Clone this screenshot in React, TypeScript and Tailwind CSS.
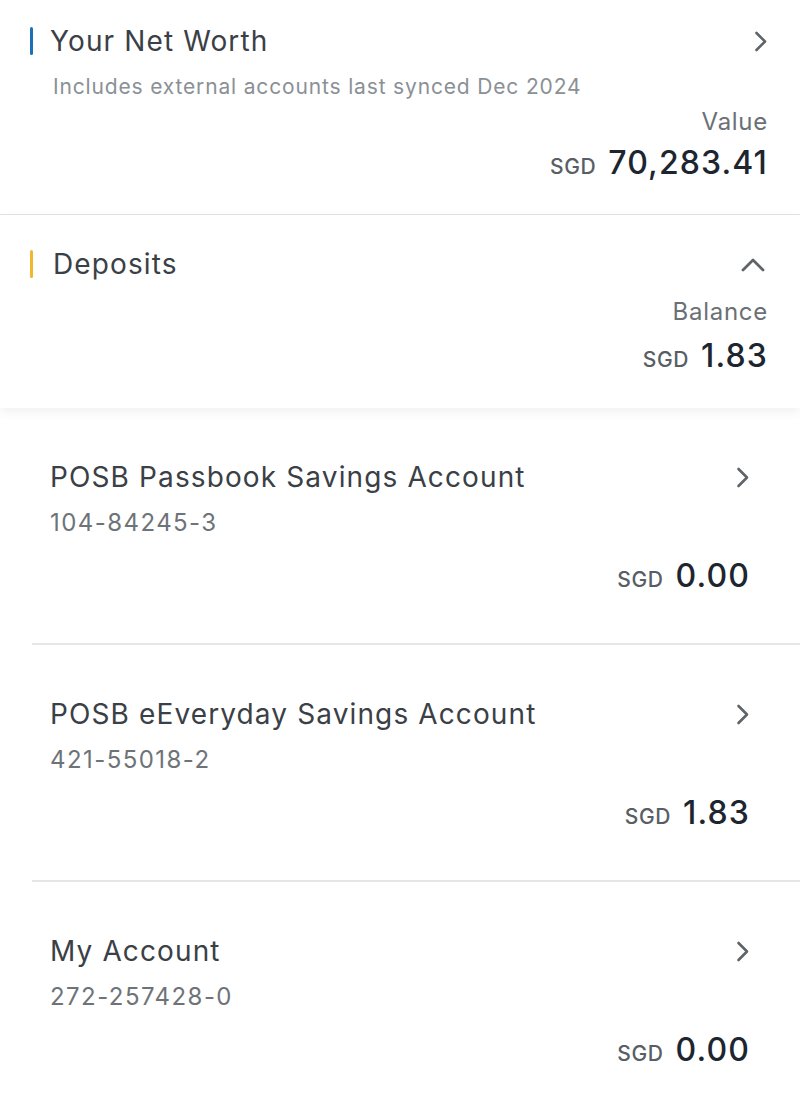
import React from "react";

const ChevronRight = () => (
  <svg width="14" height="21" viewBox="0 0 14 21" fill="none" className="shrink-0">
    <path d="M2.5 2 L11 10.5 L2.5 19" stroke="#5f6469" strokeWidth="2.6" strokeLinecap="round" strokeLinejoin="round" />
  </svg>
);

const ChevronUp = () => (
  <svg width="24" height="15" viewBox="0 0 24 15" fill="none" className="shrink-0">
    <path d="M2 13 L12 3 L22 13" stroke="#5f6469" strokeWidth="2.8" strokeLinecap="round" strokeLinejoin="round" />
  </svg>
);

const Amount = ({ value }: { value: string }) => (
  <div className="flex h-[40px] items-baseline justify-end gap-[12px] leading-[40px]">
    <span className="text-[21px] font-medium tracking-[0.03em] text-[#585e64]">SGD</span>
    <span className="text-[32px] font-medium tracking-[0.035em] text-[#1d2630]">{value}</span>
  </div>
);

const accounts = [
  { name: "POSB Passbook Savings Account", number: "104-84245-3", amount: "0.00" },
  { name: "POSB eEveryday Savings Account", number: "421-55018-2", amount: "1.83" },
  { name: "My Account", number: "272-257428-0", amount: "0.00" },
];

export default function App() {
  return (
    <div className="min-h-[1107px] w-[800px] bg-white" style={{ fontFamily: "Inter, 'Noto Sans', sans-serif" }}>
      <section className="relative border-b border-[#e3e3e3] pl-[30px] pr-[32px] pt-[24px] pb-[31px]">
        <div className="flex items-center justify-between">
          <div className="flex items-center">
            <div className="h-[28px] w-[3px] rounded-full bg-[#1d6fb8]" />
            <span className="ml-[17px] text-[28px] leading-[34px] tracking-[0.04em] text-[#3a4046]">Your Net Worth</span>
          </div>
          <ChevronRight />
        </div>
        <div className="ml-[23px] mt-[17px] text-[21px] leading-[24px] tracking-[0.04em] text-[#8a9096]">
          Includes external accounts last synced Dec 2024
        </div>
        <div className="mt-[9px] text-right text-[24px] leading-[28px] tracking-[0.03em] text-[#6b7075]">Value</div>
        <div className="mt-[7px]">
          <Amount value="70,283.41" />
        </div>
      </section>

      <section className="relative z-10 bg-white pl-[30px] pr-[32px] pt-[32px] pb-[32px] shadow-[0_4px_10px_rgba(0,0,0,0.06)]">
        <div className="flex items-center justify-between">
          <div className="flex items-center">
            <div className="h-[28px] w-[3px] rounded-full bg-[#f0b72f]" />
            <span className="ml-[20px] text-[28px] leading-[34px] tracking-[0.04em] text-[#3a4046]">Deposits</span>
          </div>
          <div className="mr-[3px]">
            <ChevronUp />
          </div>
        </div>
        <div className="mt-[17px] text-right text-[24px] leading-[28px] tracking-[0.03em] text-[#6b7075]">Balance</div>
        <div className="mt-[10px]">
          <Amount value="1.83" />
        </div>
      </section>

      <div className="pl-[32px]">
        {accounts.map((a, i) => (
          <div
            key={a.number}
            className={`pl-[18px] pr-[50px] pt-[52px] pb-[47px] ${i < accounts.length - 1 ? "border-b-2 border-[#e6e6e6]" : ""}`}
          >
            <div className="flex items-center justify-between">
              <span className="text-[28px] leading-[34px] tracking-[0.04em] text-[#3a4046]">{a.name}</span>
              <ChevronRight />
            </div>
            <div className="mt-[15px] text-[24px] leading-[28px] tracking-[0.06em] text-[#6e7378]">{a.number}</div>
            <div className="mt-[19px]">
              <Amount value={a.amount} />
            </div>
          </div>
        ))}
      </div>
    </div>
  );
}
